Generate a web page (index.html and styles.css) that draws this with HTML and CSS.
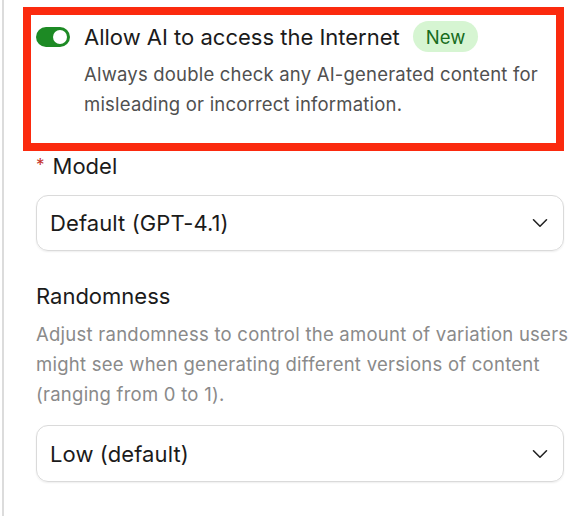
FILE: index.html
```html
<!DOCTYPE html>
<html lang="en">
<head>
<meta charset="utf-8">
<title>AI settings</title>
<link rel="stylesheet" href="styles.css">
</head>
<body>
<div class="panel">
  <section class="highlight">
    <div class="toggle-row">
      <span class="toggle" role="switch" aria-checked="true"><span class="knob"></span></span>
      <span class="toggle-title">Allow AI to access the Internet</span>
      <span class="badge">New</span>
    </div>
    <p class="toggle-desc">Always double check any AI-generated content for misleading or incorrect information.</p>
  </section>

  <div class="field field-model">
    <div class="label"><span class="req">*</span>Model</div>
    <div class="select">
      <span class="select-value">Default (GPT-4.1)</span>
      <svg class="chevron" width="16" height="10" viewBox="0 0 16 10"><path d="M1.5 1.8 L8 8.2 L14.5 1.8" fill="none" stroke="#222" stroke-width="1.6" stroke-linecap="round" stroke-linejoin="round"/></svg>
    </div>
  </div>

  <div class="field field-random">
    <div class="label">Randomness</div>
    <p class="help">Adjust randomness to control the amount of variation users might see when generating different versions of content (ranging from 0 to 1).</p>
    <div class="select select-low">
      <span class="select-value">Low (default)</span>
      <svg class="chevron" width="16" height="10" viewBox="0 0 16 10"><path d="M1.5 1.8 L8 8.2 L14.5 1.8" fill="none" stroke="#222" stroke-width="1.6" stroke-linecap="round" stroke-linejoin="round"/></svg>
    </div>
  </div>
</div>
</body>
</html>
```

FILE: styles.css
```css
html, body {
  margin: 0;
  padding: 0;
  background: #ffffff;
}

body {
  font-family: Inter, "Noto Sans", "Liberation Sans", sans-serif;
  color: #1b1b1b;
  -webkit-font-smoothing: antialiased;
}

.panel {
  margin-left: 2px;
  border-left: 2px solid #dcdcdc;
  height: 516px;
  box-sizing: border-box;
  padding: 7px 16px 0 19px;
}

.highlight {
  border: 8px solid #fb2a0e;
  padding: 6px 8px 24px 5px;
}

.toggle-row {
  display: flex;
  align-items: center;
  height: 31px;
}

.toggle {
  position: relative;
  width: 34px;
  height: 20px;
  border-radius: 10px;
  background: #1d8a24;
  flex: none;
}

.knob {
  position: absolute;
  top: 3px;
  right: 3px;
  width: 14px;
  height: 14px;
  border-radius: 50%;
  background: #ffffff;
}

.toggle-title {
  margin-left: 14px;
  font-size: 22px;
  color: #1b1b1b;
}

.badge {
  margin-left: 13px;
  height: 31px;
  padding: 0 13px;
  border-radius: 16px;
  background: #d6f5d2;
  color: #176c1c;
  font-size: 18.5px;
  display: flex;
  align-items: center;
}

.toggle-desc {
  margin: 7px 0 0 48px;
  font-size: 18.5px;
  letter-spacing: 0.2px;
  line-height: 30px;
  color: #505050;
}

.field {
  margin-left: 13px;
}

.label {
  font-size: 22px;
  line-height: 28px;
  color: #1b1b1b;
}

.req {
  color: #c4302b;
  font-size: 17px;
  margin-right: 8px;
  vertical-align: 3px;
}

.field-model .select {
  margin-top: 15px;
}

.select {
  height: 56px;
  box-sizing: border-box;
  border: 1px solid #dadada;
  border-radius: 12px;
  box-shadow: 0 1px 2px rgba(0, 0, 0, 0.07);
  display: flex;
  align-items: center;
  justify-content: space-between;
  padding: 0 15px 0 13px;
}

.select-value {
  font-size: 22px;
  letter-spacing: 0.1px;
  color: #1b1b1b;
}

.chevron {
  flex: none;
}

.field-random {
  margin-top: 31px;
}

.help {
  margin: 9px -8px 0 0;
  font-size: 18.5px;
  letter-spacing: 0.25px;
  line-height: 30px;
  color: #8a8a8a;
}

.select-low {
  margin-top: 16px;
  height: 57px;
}
```
